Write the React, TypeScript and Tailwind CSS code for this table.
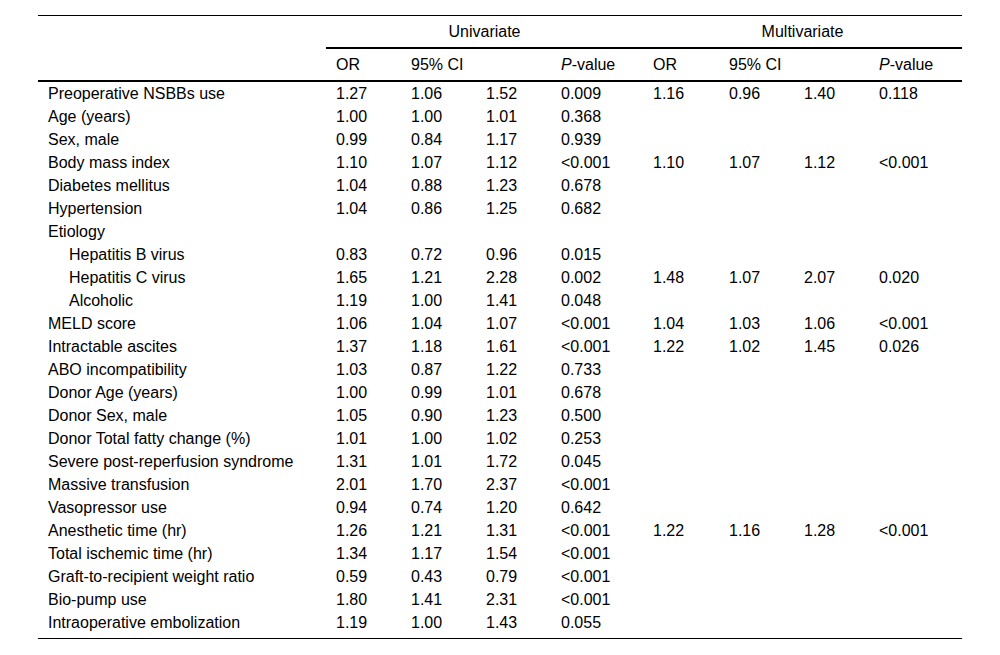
import React from 'react';

type Row = {
  label: string;
  indent?: boolean;
  uni?: [string, string, string, string];
  multi?: [string, string, string, string];
};

const rows: Row[] = [
  { label: 'Preoperative NSBBs use', uni: ['1.27', '1.06', '1.52', '0.009'], multi: ['1.16', '0.96', '1.40', '0.118'] },
  { label: 'Age (years)', uni: ['1.00', '1.00', '1.01', '0.368'] },
  { label: 'Sex, male', uni: ['0.99', '0.84', '1.17', '0.939'] },
  { label: 'Body mass index', uni: ['1.10', '1.07', '1.12', '<0.001'], multi: ['1.10', '1.07', '1.12', '<0.001'] },
  { label: 'Diabetes mellitus', uni: ['1.04', '0.88', '1.23', '0.678'] },
  { label: 'Hypertension', uni: ['1.04', '0.86', '1.25', '0.682'] },
  { label: 'Etiology' },
  { label: 'Hepatitis B virus', indent: true, uni: ['0.83', '0.72', '0.96', '0.015'] },
  { label: 'Hepatitis C virus', indent: true, uni: ['1.65', '1.21', '2.28', '0.002'], multi: ['1.48', '1.07', '2.07', '0.020'] },
  { label: 'Alcoholic', indent: true, uni: ['1.19', '1.00', '1.41', '0.048'] },
  { label: 'MELD score', uni: ['1.06', '1.04', '1.07', '<0.001'], multi: ['1.04', '1.03', '1.06', '<0.001'] },
  { label: 'Intractable ascites', uni: ['1.37', '1.18', '1.61', '<0.001'], multi: ['1.22', '1.02', '1.45', '0.026'] },
  { label: 'ABO incompatibility', uni: ['1.03', '0.87', '1.22', '0.733'] },
  { label: 'Donor Age (years)', uni: ['1.00', '0.99', '1.01', '0.678'] },
  { label: 'Donor Sex, male', uni: ['1.05', '0.90', '1.23', '0.500'] },
  { label: 'Donor Total fatty change (%)', uni: ['1.01', '1.00', '1.02', '0.253'] },
  { label: 'Severe post-reperfusion syndrome', uni: ['1.31', '1.01', '1.72', '0.045'] },
  { label: 'Massive transfusion', uni: ['2.01', '1.70', '2.37', '<0.001'] },
  { label: 'Vasopressor use', uni: ['0.94', '0.74', '1.20', '0.642'] },
  { label: 'Anesthetic time (hr)', uni: ['1.26', '1.21', '1.31', '<0.001'], multi: ['1.22', '1.16', '1.28', '<0.001'] },
  { label: 'Total ischemic time (hr)', uni: ['1.34', '1.17', '1.54', '<0.001'] },
  { label: 'Graft-to-recipient weight ratio', uni: ['0.59', '0.43', '0.79', '<0.001'] },
  { label: 'Bio-pump use', uni: ['1.80', '1.41', '2.31', '<0.001'] },
  { label: 'Intraoperative embolization', uni: ['1.19', '1.00', '1.43', '0.055'] },
];

const PValue = () => (
  <>
    <i>P</i>-value
  </>
);

export default function App() {
  return (
    <div className="min-h-[655px] bg-white pt-[15px] text-black" style={{ fontFamily: '"Liberation Sans", Arial, sans-serif' }}>
      <table className="mx-auto w-[924px] table-fixed border-collapse text-[16px] leading-[23px]">
        <colgroup>
          <col className="w-[288px]" />
          <col className="w-[75px]" />
          <col className="w-[75px]" />
          <col className="w-[75px]" />
          <col className="w-[92px]" />
          <col className="w-[76px]" />
          <col className="w-[75px]" />
          <col className="w-[75px]" />
          <col className="w-[93px]" />
        </colgroup>
        <thead>
          <tr className="h-[32px] border-t border-black">
            <th />
            <th colSpan={4} className="border-b-2 border-black text-center font-normal">
              Univariate
            </th>
            <th colSpan={4} className="border-b-2 border-black text-center font-normal">
              Multivariate
            </th>
          </tr>
          <tr className="h-[33px] border-b-2 border-black">
            <th />
            <th className="pl-[10px] text-left font-normal">OR</th>
            <th colSpan={2} className="pl-[10px] text-left font-normal">95% CI</th>
            <th className="pl-[10px] text-left font-normal"><PValue /></th>
            <th className="pl-[10px] text-left font-normal">OR</th>
            <th colSpan={2} className="pl-[10px] text-left font-normal">95% CI</th>
            <th className="pl-[10px] text-left font-normal"><PValue /></th>
          </tr>
        </thead>
        <tbody className="border-b border-black">
          {rows.map((r, i) => {
            const cells = [...(r.uni ?? ['', '', '', '']), ...(r.multi ?? ['', '', '', ''])];
            const last = i === rows.length - 1;
            return (
              <tr key={r.label} className={last ? 'h-[28px] align-top' : 'h-[23px]'}>
                <td className={r.indent ? 'pl-[31px]' : 'pl-[10px]'}>{r.label}</td>
                {cells.map((c, j) => (
                  <td key={j} className="pl-[10px]">
                    {c}
                  </td>
                ))}
              </tr>
            );
          })}
        </tbody>
      </table>
    </div>
  );
}
